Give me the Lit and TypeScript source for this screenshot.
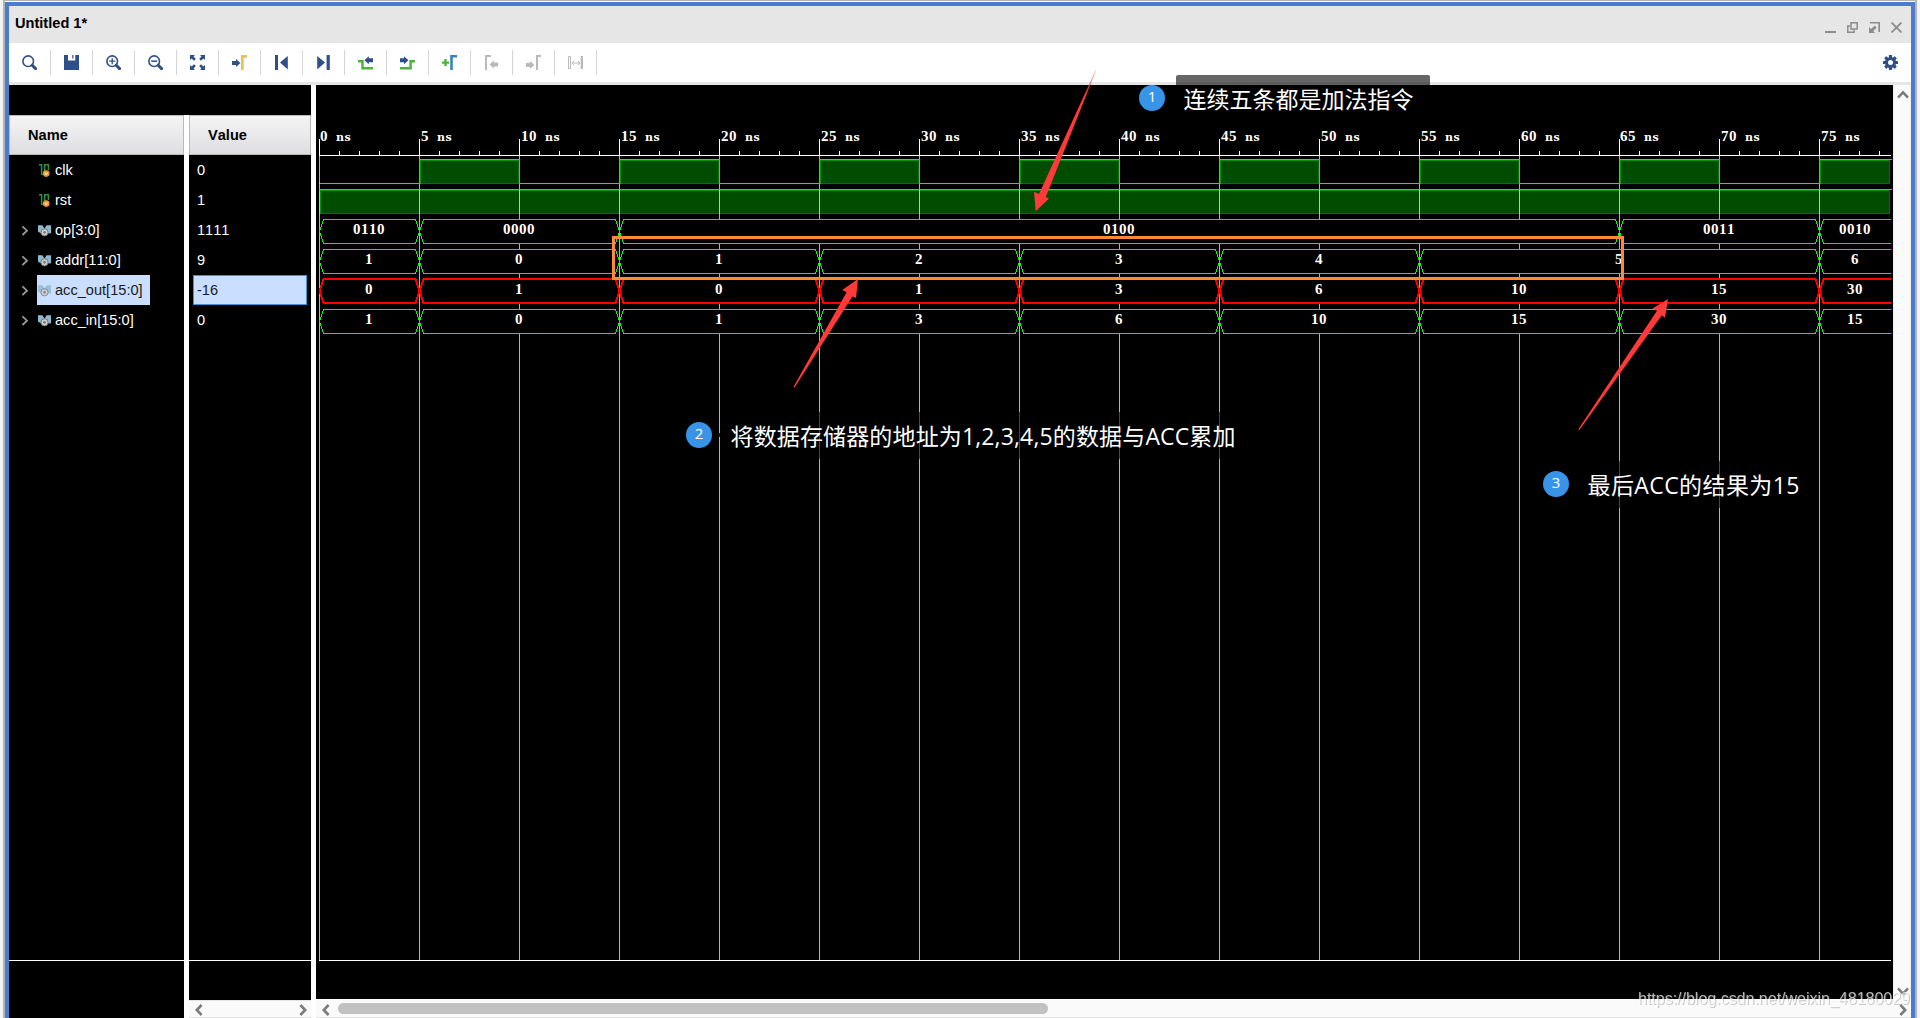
import { LitElement, html, svg, css } from "lit";
import { customElement } from "lit/decorators.js";

const BLUE = "#2f4f88";
const GREEN = "#4cb43c";
const GRAY = "#b9b9b9";

const arrowRight = (x: number, y: number, c: string) =>
  svg`<path d=${`M${x} ${y + 2}h4v-2l4.4 4l-4.4 4v-2h-4z`} fill=${c}></path>`;
const arrowLeft = (x: number, y: number, c: string) =>
  svg`<path d=${`M${x + 8.6} ${y + 2}h-4.2v-2l-4.4 4l4.4 4v-2h4.2z`} fill=${c}></path>`;

const lens = svg`<circle cx="6.2" cy="6.2" r="5.3" fill="none" stroke=${BLUE} stroke-width="1.6"></circle>
  <path d="M10.2 10.2L13.6 13.6" stroke=${BLUE} stroke-width="3" stroke-linecap="round"></path>`;

const toolIcons = [
  lens,
  svg`<path d="M0 0H4V5.4H11.3V0H15V15H0Z" fill=${BLUE}></path><path d="M8 0h1.6v3.6h-1.6z" fill=${BLUE} opacity=".75"></path>`,
  svg`${lens}<path d="M3.2 6.2h6M6.2 3.2v6" stroke=${BLUE} stroke-width="1.3"></path>`,
  svg`${lens}<path d="M3.2 6.2h6" stroke=${BLUE} stroke-width="1.5"></path>`,
  svg`<g fill=${BLUE}><path d="M0 0h5L3.6 1.6L5.8 4L4 5.8L1.6 3.6L0 5z"></path><path d="M15 0h-5l1.4 1.6L9.2 4L11 5.8l2.4-2.2L15 5z"></path><path d="M0 15h5l-1.4-1.6L5.8 11L4 9.2l-2.4 2.2L0 10z"></path><path d="M15 15h-5l1.4-1.6L9.2 11L11 9.2l2.4 2.2L15 10z"></path></g>`,
  svg`${arrowRight(0, 4, BLUE)}<path d="M10.3 15V1.4H15" fill="none" stroke="#e2c65c" stroke-width="2.8"></path>`,
  svg`<path d="M1 0h3v15H1zM13.8 1v13.4L6 7.6z" fill=${BLUE}></path>`,
  svg`<path d="M1.2 1v13.4L9 7.6zM10.6 0h3.2v15h-3.2z" fill=${BLUE}></path>`,
  svg`<path d="M0 6.2H4.5V13.2H15" fill="none" stroke=${GREEN} stroke-width="2.5"></path>${arrowLeft(6.4, 1.2, BLUE)}`,
  svg`<path d="M0 13.2H10.6V6.2H15" fill="none" stroke=${GREEN} stroke-width="2.5"></path>${arrowRight(0, 1.2, BLUE)}`,
  svg`<path d="M0 7.6h7M3.5 4.1v7" stroke=${GREEN} stroke-width="2.4"></path><path d="M9.5 15V1.2H15" fill="none" stroke="#3c82b8" stroke-width="2.6"></path>`,
  svg`<path d="M2 15V1H7" fill="none" stroke=${GRAY} stroke-width="2"></path>${arrowLeft(5.6, 5.5, GRAY)}`,
  svg`<path d="M11 15V1H15" fill="none" stroke=${GRAY} stroke-width="2"></path>${arrowRight(0, 6, GRAY)}`,
  svg`<path d="M.5 1.5h2v12h-2z" fill="none" stroke=${GRAY}></path><path d="M12.7 1h2.3v13h-2.3z" fill=${GRAY}></path><path d="M4 8h7.6M6 5.8L3.8 8L6 10.2M9.8 5.8L12 8L9.8 10.2" fill="none" stroke=${GRAY}></path>`,
];

const scalarIcon = svg`<path d="M1 .7H3.6V10M6.7 8V.7H10.4V6" fill="none" stroke="#2f8f45" stroke-width="1.5"></path>
  <path d="M3 10.4h3" stroke="#2f8f45" stroke-width="1.3"></path>
  <circle cx="8.2" cy="9.6" r="3.3" fill="#f3952b"></circle>
  <path d="M6.9 8.5L8.2 10.9L9.5 8.5" fill="none" stroke="#fff" stroke-width="1"></path>`;
const busIcon = (sel: boolean) => svg`<g opacity=${sel ? 0.8 : 1}>
  <path d="M0 1.3H4.4L6.5 4.6L8.6 1.3H13V9.2L10 9.4L6.5 7L3 9.4L0 7.4z" fill="#8fb9cf"></path>
  <circle cx="6.5" cy="8.3" r="3.6" fill="#cfcfcf" stroke="#6c6c6c" stroke-width=".9"></circle>
  <circle cx="6.5" cy="8.3" r="1.4" fill="#777"></circle></g>`;

interface Signal {
  name: string;
  value: string;
  bus?: boolean;
  selected?: boolean;
}
const signals: Signal[] = [
  { name: "clk", value: "0" },
  { name: "rst", value: "1" },
  { name: "op[3:0]", value: "1111", bus: true },
  { name: "addr[11:0]", value: "9", bus: true },
  { name: "acc_out[15:0]", value: "-16", bus: true, selected: true },
  { name: "acc_in[15:0]", value: "0", bus: true },
];

/* Each bus segment is [start ns, value]; it lasts until the next one starts. */
const buses: { top: number; red?: boolean; segs: [number, string][] }[] = [
  { top: 219, segs: [[0, "0110"], [5, "0000"], [15, "0100"], [65, "0011"], [75, "0010"]] },
  { top: 249, segs: [[0, "1"], [5, "0"], [15, "1"], [25, "2"], [35, "3"], [45, "4"], [55, "5"], [75, "6"]] },
  { top: 279, red: true, segs: [[0, "0"], [5, "1"], [15, "0"], [25, "1"], [35, "3"], [45, "6"], [55, "10"], [65, "15"], [75, "30"]] },
  { top: 309, segs: [[0, "1"], [5, "0"], [15, "1"], [25, "3"], [35, "6"], [45, "10"], [55, "15"], [65, "30"], [75, "15"]] },
];

const END = 1891;
const xOf = (ns: number) => 319 + ns * 20;
const cells = (s: string, x: number) => [...s].map((_, i) => x + i * 8).join(" ");

@customElement("wave-canvas")
export class WaveCanvas extends LitElement {
  static styles = css`
    :host { display: block; width: 1577px; height: 914px; background: #000; }
    svg { display: block; }
    .mono { font: bold 15px "Liberation Serif", serif; fill: #fff; }
    .unit { font: bold 11px "DejaVu Serif", serif; }
    .px { shape-rendering: crispEdges; }
  `;

  private ruler() {
    const ticks = [];
    for (let i = 0; i <= 78; i++) {
      const major = i % 5 === 0;
      ticks.push(svg`<rect x=${xOf(i)} y=${major ? 139 : 151} width="1" height=${major ? 17 : 5} fill="#fff"></rect>`);
      if (major) {
        const num = String(i);
        const x = xOf(i) + (i === 0 || i === 65 ? 1 : 2);
        const unitX = x + (num.length + 1) * 8;
        ticks.push(svg`<text class="mono" x=${cells(num, x)} y="141">${num}<tspan class="unit" x=${`${unitX} ${unitX + 8.5}`}>ns</tspan></text>`);
      }
    }
    return svg`${ticks}<rect x="319" y="155" width=${END - 319} height="1" fill="#fff"></rect>`;
  }

  private high(x0: number, x1: number, top: number, open: boolean) {
    return svg`<rect x=${x0} y=${top} width=${x1 - x0} height="25" fill="#004c00"></rect>
      <rect x=${x0} y=${top + 24} width=${x1 - x0} height="1" fill="#007400"></rect>
      <rect x=${x0} y=${top} width=${x1 - x0 + (open ? 2 : 1)} height="1" fill="#00ff00"></rect>
      <rect x=${x0 + 1} y=${top + 1} width=${x1 - x0 - 1} height="1" fill="#009400"></rect>
      <rect x=${x0 + 1} y=${top + 1} width="1" height="24" fill="#009400"></rect>
      <rect x=${x1 - 1} y=${top + 1} width="1" height="24" fill="#007400"></rect>`;
  }

  private clock() {
    const parts = [];
    for (let t = 0; t < 78; t += 5) {
      const x0 = xOf(t);
      if ((t / 5) % 2 === 0) {
        parts.push(svg`<rect x=${x0} y="183" width="101" height="1" fill="#00ff00"></rect>`);
      } else {
        const open = x0 + 100 > END;
        const x1 = open ? END - 1 : x0 + 100;
        parts.push(this.high(x0, x1, 159, open));
      }
    }
    return parts;
  }

  private clockEdges() {
    const parts = [];
    for (let t = 5; t < 78; t += 5) {
      parts.push(svg`<rect x=${xOf(t)} y="159" width="1" height="25" fill="#00ff00"></rect>`);
    }
    return parts;
  }

  private bus(b: (typeof buses)[number]) {
    const c = b.red ? "#ff0000" : "#00ff00";
    const w = b.red ? 2 : 1;
    const top = b.red ? b.top : b.top + 0.5;
    const bot = top + 24;
    const mid = top + 12;
    return b.segs.map(([ns, label], i) => {
      const next = b.segs[i + 1];
      const a = xOf(ns) + 0.5;
      const z = next ? xOf(next[0]) + 0.5 : END;
      const d = next
        ? `M${a} ${mid}L${a + 4} ${top}H${z - 4}L${z} ${mid}L${z - 4} ${bot}H${a + 4}Z`
        : `M${z} ${top}H${a + 4}L${a} ${mid}L${a + 4} ${bot}H${z}`;
      const m = next ? (xOf(ns) + xOf(next[0])) / 2 : 1855;
      return svg`<path class="px" d=${d} fill="#000" stroke=${c} stroke-width=${w}></path>
        <text class="mono" x=${cells(label, m - 4 * label.length)} y=${b.top + 15}>${label}</text>`;
    });
  }

  render() {
    const grid = [];
    for (let t = 0; t < 78; t += 5) {
      grid.push(svg`<rect x=${xOf(t)} y="156" width="1" height="804" fill="#fff" opacity=".7"></rect>`);
    }
    return html`<svg width="1577" height="914" viewBox="316 85 1577 914">
      ${this.clock()}
      ${this.high(319, END - 1, 189, true)}
      ${grid}
      ${this.clockEdges()}
      <rect x="319" y="189" width="1572" height="1" fill="#00ff00"></rect>
      ${buses.map((b) => this.bus(b))}
      ${this.ruler()}
      <rect x="319" y="960" width="1572" height="1" fill="#fff"></rect>
    </svg>`;
  }
}

@customElement("note-layer")
export class NoteLayer extends LitElement {
  static styles = css`
    :host { position: absolute; left: 0; top: 0; width: 1920px; height: 1018px; pointer-events: none; }
    svg { display: block; }
    .note { font: 23px "Open Sans", "Noto Sans CJK SC", sans-serif; fill: #fff; }
    .num { font: 15px "Open Sans", sans-serif; fill: #fff; text-anchor: middle; }
    .mark { font: 16px "Liberation Sans", sans-serif; fill: rgba(255, 255, 255, 0.7); filter: drop-shadow(1px 1px 0.5px rgba(120, 120, 120, 0.55)); }
  `;

  private badge(n: number, x: number, y: number) {
    return svg`<circle cx=${x} cy=${y} r="13" fill="#3794e8"></circle><text class="num" x=${x} y=${y + 4}>${n}</text>`;
  }

  render() {
    return html`<svg width="1920" height="1018" viewBox="0 0 1920 1018">
      <rect x="613.5" y="237.5" width="1009" height="41" fill="none" stroke="#ff8a35" stroke-width="3"></rect>
      <defs>
        <linearGradient id="fade" gradientUnits="userSpaceOnUse" x1="1096" y1="70" x2="1085" y2="95">
          <stop offset="0" stop-color="#ff3a38" stop-opacity=".4"></stop>
          <stop offset="1" stop-color="#ff3a38"></stop>
        </linearGradient>
      </defs>
      <path d="M1035.7 211.3L1034 191.7L1039 193.9L1095.6 70.3L1096 70.6L1045.7 197.3L1049 198.5Z" fill="url(#fade)"></path>
      <path d="M858 279L842.2 290L846.6 292.2L793.4 387L794.4 387.7L852.4 296.6L856 298Z" fill="#ff3a38"></path>
      <path d="M1668 299L1652.5 308.4L1657 310.8L1578.3 429.3L1579.4 430L1661.8 315.2L1665 317.7Z" fill="#ff3a38"></path>

      <rect x="1176" y="75" width="254" height="47" rx="2" fill="rgba(0,0,0,.6)"></rect>
      ${this.badge(1, 1152, 98)}
      <text class="note" x="1183.5" y="107.5" textLength="230">连续五条都是加法指令</text>

      <rect x="723" y="412" width="522" height="47" rx="2" fill="rgba(0,0,0,.6)"></rect>
      <rect x="719" y="433" width="1" height="4" fill="#222"></rect>
      ${this.badge(2, 699, 435)}
      <text class="note" x="730.5" y="444.5" textLength="505">将数据存储器的地址为1,2,3,4,5的数据与ACC累加</text>

      <rect x="1580" y="461" width="228" height="47" rx="2" fill="rgba(0,0,0,.6)"></rect>
      ${this.badge(3, 1556, 484)}
      <text class="note" x="1587.5" y="493.5" textLength="212">最后ACC的结果为15</text>

      <text class="mark" x="1638" y="1004" textLength="272">https://blog.csdn.net/weixin_48180029</text>
    </svg>`;
  }
}

@customElement("app-root")
export class AppRoot extends LitElement {
  static styles = css`
    :host {
      display: block; position: relative; width: 1920px; height: 1018px; overflow: hidden;
      background: #f3f3f3; font: 14.6px "Liberation Sans", Arial, sans-serif; color: #000; font-kerning: none;
    }
    * { box-sizing: border-box; }
    svg { display: block; flex: none; }
    .outer {
      height: 1018px; padding: 1px 0 0; margin: 0 3px 0 3px;
      border: solid #b4b4b4; border-width: 1px 2px 0 2px; background: #fff;
    }
    .frame { height: 1016px; border: 4px solid #4a7dcf; border-bottom: 0; display: flex; flex-direction: column; }
    .title { height: 37px; flex: none; background: #e6e6e6; display: flex; align-items: center; padding: 0 9px 0 6px; }
    .title b { flex: 1; padding-bottom: 3px; }
    .wins { display: flex; gap: 11px; padding-top: 6px; }
    .tools { height: 39px; flex: none; background: #fff; display: flex; align-items: center; }
    .tool { width: 42px; height: 25px; display: flex; align-items: center; justify-content: center; border-right: 1px solid #d4d4d4; }
    .gear { margin-left: auto; padding-right: 13px; }
    .strip { height: 3px; flex: none; background: #e6e6e6; }
    .body { flex: 1; display: flex; min-height: 0; }
    .left { width: 302px; flex: none; display: flex; flex-direction: column; background: #000; }
    .blank { height: 30px; flex: none; }
    .cols { flex: 1; display: flex; }
    .col { display: flex; flex-direction: column; color: #fff; }
    .names { width: 175px; }
    .gap { width: 5px; flex: none; background: #fff; }
    .values { width: 122px; }
    .head {
      height: 40px; border: 1px solid #b9b9b9; background: linear-gradient(#f4f4f4, #dedee2);
      color: #000; font-weight: bold; display: flex; align-items: center; padding-left: 18px;
    }
    .row { height: 30px; display: flex; align-items: center; }
    .names .row { padding-left: 12px; }
    .chev { width: 16px; }
    .sig { height: 30px; display: flex; align-items: center; gap: 4px; padding: 0 7px 0 1px; }
    .sel { background: #cadeff; color: #1a1a1a; }
    .values .row { margin: 0 4px; padding-left: 4px; }
    .values .row.sel { border: 1px solid #3f93d2; padding-left: 3px; }
    .rest { flex: 1; }
    .foot { border-top: 1px solid #fff; }
    .names .foot { height: 58px; }
    .values .foot { height: 40px; }
    .hbar {
      height: 18px; flex: none; background: #fafafa; border: solid #e4e4e4; border-width: 1px 0;
      display: flex; align-items: center; padding: 2px 4px 0 6px; justify-content: space-between;
    }
    .right { flex: 1; min-width: 0; display: flex; flex-direction: column; }
    .top { display: flex; height: 914px; }
    .vbar {
      width: 18px; flex: none; background: #fafafa; border: solid #ededed; border-width: 0 1px; padding: 5px 0 3px 3px;
      display: flex; flex-direction: column; justify-content: space-between;
    }
    .right .hbar { height: 19px; border-top: 1px solid #fff; justify-content: flex-start; }
    .thumb { width: 710px; height: 11px; border-radius: 6px; background: #c1c1c1; margin: 0 auto 2px 8px; flex: none; }
  `;

  private arrow(d: string, w: number, h: number) {
    return html`<svg width=${w} height=${h} viewBox=${`0 0 ${w} ${h}`}><path d=${d} fill="none" stroke="#7c7c7c" stroke-width="2.6"></path></svg>`;
  }

  private gear() {
    const teeth = [0, 45, 90, 135].map(
      (a) => svg`<rect x="5.9" y="0" width="3.2" height="15" rx=".6" transform=${`rotate(${a} 7.5 7.5)`} fill=${BLUE}></rect>`
    );
    return html`<svg width="15" height="15" viewBox="0 0 15 15">${teeth}<circle cx="7.5" cy="7.5" r="5.6" fill=${BLUE}></circle><circle cx="7.5" cy="7.5" r="2.5" fill="#fff"></circle></svg>`;
  }

  render() {
    const left = "M6.6 1L1.8 6L6.6 11";
    const right = "M1.4 1L6.2 6L1.4 11";
    return html`
      <div class="outer"><div class="frame">
        <div class="title">
          <b>Untitled 1*</b>
          <div class="wins">
            <svg width="11" height="11"><path d="M0 10h11" stroke="#8c8c8c" stroke-width="2"></path></svg>
            <svg width="11" height="11"><path d="M3 4H.8V10.2H7V8" fill="none" stroke="#8c8c8c" stroke-width="1.5"></path><path d="M4 .8H10.2V7H4Z" fill="none" stroke="#8c8c8c" stroke-width="1.5"></path></svg>
            <svg width="11" height="11"><path d="M1 .8H10.2V10" fill="none" stroke="#8c8c8c" stroke-width="1.6"></path><path d="M0 5V11H6L4.3 9.3L7.6 5.6L5.8 3.8L1.9 6.9Z" fill="#8c8c8c"></path></svg>
            <svg width="11" height="11"><path d="M.5 .5L10.5 10.5M10.5 .5L.5 10.5" stroke="#8c8c8c" stroke-width="1.8"></path></svg>
          </div>
        </div>
        <div class="tools">
          ${toolIcons.map((i) => html`<div class="tool"><svg width="15" height="15" viewBox="0 0 15 15">${i}</svg></div>`)}
          <div class="gear">${this.gear()}</div>
        </div>
        <div class="strip"></div>
        <div class="body">
          <div class="left">
            <div class="blank"></div>
            <div class="cols">
              <div class="col names">
                <div class="head">Name</div>
                ${signals.map((s) => html`<div class="row">
                  <div class="chev">${s.bus
                    ? html`<svg width="8" height="11"><path d="M1.4 1.4L6 5.7L1.4 10" fill="none" stroke="#989898" stroke-width="1.8"></path></svg>`
                    : ""}</div>
                  <div class="sig ${s.selected ? "sel" : ""}">
                    <svg width="13" height="13" viewBox="0 0 13 13">${s.bus ? busIcon(!!s.selected) : scalarIcon}</svg>
                    <span>${s.name}</span>
                  </div>
                </div>`)}
                <div class="rest"></div>
                <div class="foot"></div>
              </div>
              <div class="gap"></div>
              <div class="col values">
                <div class="head">Value</div>
                ${signals.map((s) => html`<div class="row ${s.selected ? "sel" : ""}">${s.value}</div>`)}
                <div class="rest"></div>
                <div class="foot"></div>
                <div class="hbar">${this.arrow(left, 8, 12)}${this.arrow(right, 8, 12)}</div>
              </div>
            </div>
          </div>
          <div class="gap"></div>
          <div class="right">
            <div class="top">
              <wave-canvas></wave-canvas>
              <div class="vbar">
                ${this.arrow("M1 7.6L6 2.4L11 7.6", 12, 9)}
                ${this.arrow("M1 1.4L6 6.6L11 1.4", 12, 9)}
              </div>
            </div>
            <div class="hbar">${this.arrow(left, 8, 12)}<div class="thumb"></div>${this.arrow(right, 8, 12)}</div>
          </div>
        </div>
      </div></div>
      <note-layer></note-layer>
    `;
  }
}
